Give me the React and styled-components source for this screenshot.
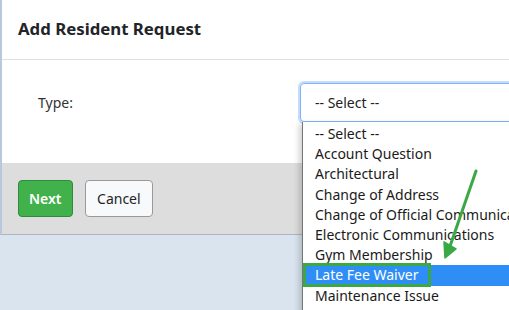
import React from 'react'
import styled, { createGlobalStyle } from 'styled-components'

const options = [
    '-- Select --',
    'Account Question',
    'Architectural',
    'Change of Address',
    'Change of Official Communications',
    'Electronic Communications',
    'Gym Membership',
    'Late Fee Waiver',
    'Maintenance Issue',
    'Parking',
]

const selectedIndex = 7

const App = () => {
    return (
        <>
            <GlobalStyle />
            <Page>
                <Modal>
                    <Header>
                        <h3>Add Resident Request</h3>
                    </Header>
                    <Body>
                        <Label>Type:</Label>
                        <SelectWrap>
                            <SelectBox>-- Select --</SelectBox>
                            <OptionList>
                                {options.map((opt, i) => (
                                    <Option key={opt} $active={i === selectedIndex}>
                                        {opt}
                                    </Option>
                                ))}
                            </OptionList>
                            <Highlight />
                            <Arrow width="40" height="100" viewBox="0 0 40 100">
                                <path d="M35 3 L7 84" stroke="#3aa845" strokeWidth="3" strokeLinecap="round" fill="none" />
                                <path d="M4 90 L3 74 L15 81 Z" fill="#3aa845" stroke="#3aa845" strokeWidth="1.5" strokeLinejoin="round" />
                            </Arrow>
                        </SelectWrap>
                    </Body>
                    <Footer>
                        <Button $primary>Next</Button>
                        <Button>Cancel</Button>
                    </Footer>
                </Modal>
            </Page>
        </>
    )
}

const GlobalStyle = createGlobalStyle`
    html, body {
        margin: 0;
        padding: 0;
        background: #d9e4ef;
        overflow: hidden;
    }
    * {
        box-sizing: border-box;
    }
`

const Page = styled.div`
    width: 509px;
    height: 310px;
    overflow: hidden;
    font-family: "Noto Sans", "Open Sans", sans-serif;
    color: #212529;
`

const Modal = styled.div`
    width: 700px;
    background: #fff;
    border-left: 2px solid #b8c9dc;
    border-bottom: 1px solid #a9b6c4;
`

const Header = styled.div`
    height: 60px;
    display: flex;
    align-items: center;
    padding: 0 16px;
    border-bottom: 1px solid #dee2e6;
    h3 {
        margin: 0;
        font-size: 16.8px;
        font-weight: 700;
        color: #212529;
        padding-bottom: 2px;
    }
`

const Body = styled.div`
    display: grid;
    grid-template-columns: 262px 300px;
    align-items: center;
    padding: 23px 0 41px 36px;
`

const Label = styled.label`
    font-size: 14px;
    color: #333;
`

const SelectWrap = styled.div`
    position: relative;
`

const SelectBox = styled.div`
    height: 39px;
    display: flex;
    align-items: center;
    padding: 0 14px;
    font-size: 14px;
    color: #222;
    border: 1px solid #80b4f5;
    border-radius: 4px;
    box-shadow: 0 0 0 2px #c4dbfb;
`

const OptionList = styled.ul`
    position: absolute;
    top: 100%;
    left: 2px;
    width: 300px;
    margin: 0;
    padding: 2px 0 0;
    list-style: none;
    background: #fff;
    border-left: 1px solid #767676;
    box-shadow: -3px 2px 6px rgba(0, 0, 0, 0.18);
    z-index: 2;
`

const Option = styled.li`
    height: 20.2px;
    line-height: 20.2px;
    padding-left: 12px;
    font-size: 14px;
    white-space: nowrap;
    color: ${p => (p.$active ? '#fff' : '#1a1a1a')};
    background: ${p => (p.$active ? '#2f8ef5' : 'transparent')};
`

const Highlight = styled.div`
    position: absolute;
    top: 180px;
    left: 3px;
    width: 128px;
    height: 24px;
    border: 3px solid #3aa845;
    z-index: 3;
`

const Arrow = styled.svg`
    position: absolute;
    top: 85px;
    left: 141px;
    z-index: 3;
`

const Footer = styled.div`
    display: flex;
    gap: 12px;
    padding: 17px 16px 17px;
    background: #dddddd;
`

const Button = styled.button`
    height: 37px;
    padding: 0 ${p => (p.$primary ? '10px' : '11.5px')};
    font-family: inherit;
    font-size: 14px;
    font-weight: ${p => (p.$primary ? 600 : 400)};
    border-radius: 4px;
    color: ${p => (p.$primary ? '#fff' : '#212529')};
    background: ${p => (p.$primary ? '#41b14c' : '#f8f9fa')};
    border: 1px solid ${p => (p.$primary ? '#2e8b3a' : '#999')};
`

export default App
